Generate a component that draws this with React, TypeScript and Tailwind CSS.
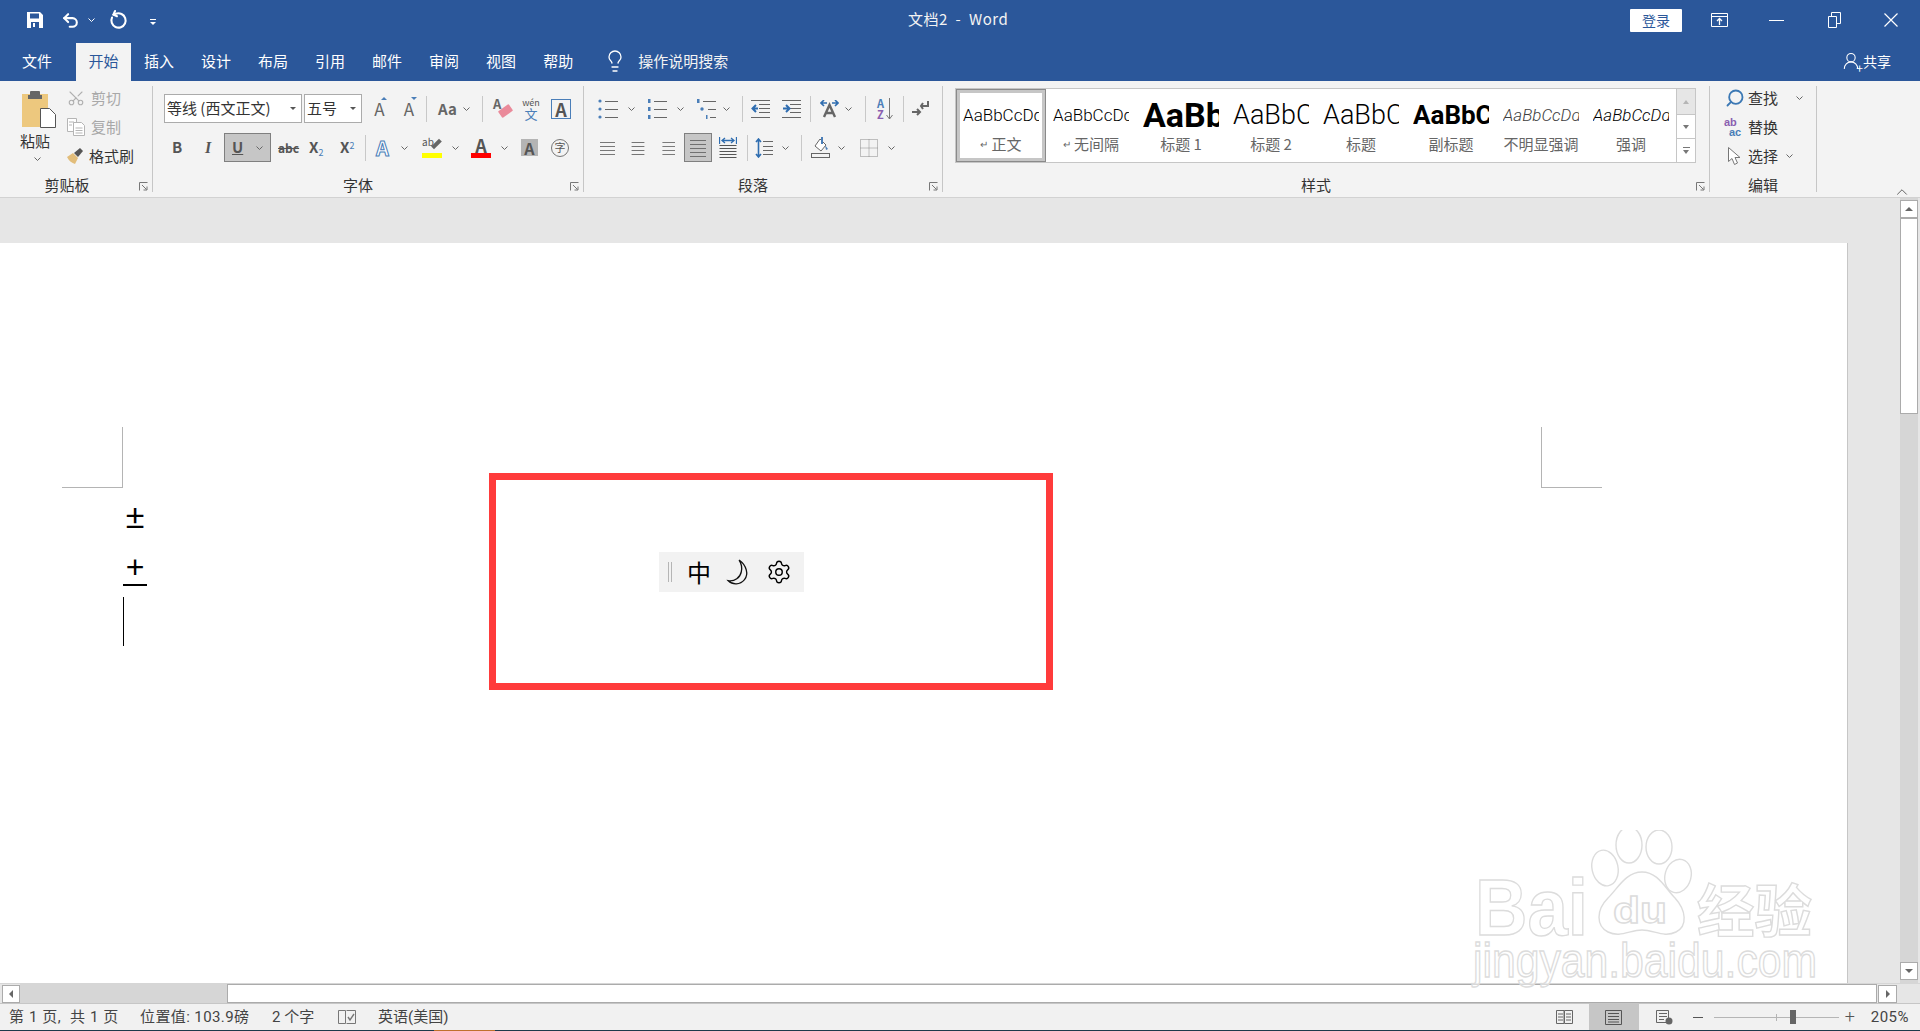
import { ChevronUp, Lightbulb, RotateCcw, Scissors, Search, Settings, Undo2, UserRound } from 'lucide-react';

const Chev = ({ className = '' }: { className?: string }) => (
	<svg className={`w-[7px] h-[4px] shrink-0 ${className}`} viewBox="0 0 7 4" fill="none" stroke="#666"><path d="M.5.5l3 3 3-3" /></svg>
);
const Sep = ({ className = '' }: { className?: string }) => <div className={`w-px h-[26px] bg-[#c8c8c8] shrink-0 ${className}`} />;

const Launcher = () => (
	<svg className="absolute right-[4px] bottom-[1px] w-[9px] h-[9px]" viewBox="0 0 9 9" fill="none" stroke="#777">
		<path d="M.5 8.5v-8h8" /><path d="M3 3l4.5 4.5M8 4.5V8H4.5" />
	</svg>
);

// list style icons for the paragraph group
const Lines = ({ rows, x1, x2, className = '' }: { rows: number[]; x1: number; x2: number; className?: string }) => (
	<svg className={`h-[18px] shrink-0 ${className}`} viewBox="0 0 20 18" stroke="#666" fill="none" preserveAspectRatio="none">
		{rows.map((y) => <path key={y} d={`M${x1} ${y}.5H${x2}`} />)}
	</svg>
);

const Bullets = ({ kind, className = '' }: { kind: 'dot' | 'num' | 'multi'; className?: string }) => (
	<svg className={`w-[20px] h-[20px] shrink-0 ${className}`} viewBox="0 0 20 20">
		{kind === 'dot' && [2, 10, 18].map((y) => <circle key={y} cx="2" cy={y} r="1.6" fill="#4a7eb8" />)}
		{kind === 'num' && [2, 10, 18].map((y) => <rect key={y} x="1" y={y - 2} width="2.5" height="4" fill="#4a7eb8" />)}
		{kind === 'multi' && <><rect x="1" y="0" width="2.5" height="4" fill="#4a7eb8" /><circle cx="6" cy="10" r="1.7" fill="#4a7eb8" /><rect x="10" y="16" width="1.5" height="4" fill="#4a7eb8" /></>}
		{kind === 'multi'
			? <path d="M7 2.5h13M12 10.5h8M14 18.5h6" stroke="#666" />
			: <path d="M7 2.5h13M7 10.5h13M7 18.5h13" stroke="#666" />}
	</svg>
);

const Indent = ({ flip, className = '' }: { flip?: boolean; className?: string }) => (
	<svg className={`w-[19px] h-[18px] shrink-0 ${className}`} viewBox="0 0 19 18" fill="none">
		<path d="M0 .5h19M8 4.5h11M8 8.5h11M8 12.5h11M0 17.5h19" stroke="#666" />
		{flip
			? <path d="M1 8.5h5M4 5l3.5 3.5L4 12" stroke="#2f6db0" strokeWidth="2" />
			: <path d="M7 8.5H2M5 5L1.5 8.5 5 12" stroke="#2f6db0" strokeWidth="2" />}
	</svg>
);

const styles = [
	{ sample: 'AaBbCcDdEe', label: '正文', mark: true, text: 'text-[17px] font-light text-black', active: true },
	{ sample: 'AaBbCcDdEe', label: '无间隔', mark: true, text: 'text-[17px] font-light text-black' },
	{ sample: 'AaBbCc', label: '标题 1', text: 'text-[34px] font-bold text-black' },
	{ sample: 'AaBbCc', label: '标题 2', text: 'text-[27px] font-light text-black' },
	{ sample: 'AaBbCc', label: '标题', text: 'text-[27px] font-light text-black' },
	{ sample: 'AaBbCc', label: '副标题', text: 'text-[26px] font-bold text-black' },
	{ sample: 'AaBbCcDdEe', label: '不明显强调', text: 'text-[17px] font-light italic text-[#404040]' },
	{ sample: 'AaBbCcDdEe', label: '强调', text: 'text-[17px] font-light italic text-black' },
];

function TitleBar() {
	return (
		<div className="h-[43px] flex items-center pb-[3px] text-white shrink-0">
			<div className="w-[908px] shrink-0 flex items-center">
				<svg className="ml-[27px] w-[16px] h-[16px]" viewBox="0 0 16 16"><path fillRule="evenodd" d="M0 0h13l3 3v13H0zM3 1.5v5h9v-5zM4 10v6h8v-6z" fill="#fff" /><rect x="6" y="11" width="2" height="4" fill="#fff" /></svg>
				<Undo2 className="ml-[18px] w-[19px] h-[19px]" strokeWidth={2.6} />
				<Chev className="ml-[8px] [&_path]:stroke-white" />
				<RotateCcw className="ml-[14px] w-[19px] h-[19px] rotate-[25deg]" strokeWidth={2.6} />
				<div className="ml-[22px] flex flex-col items-center gap-[2px] pt-[4px]">
					<div className="w-[6px] h-px bg-white" />
					<div className="w-0 h-0 border-x-[3px] border-x-transparent border-t-[3px] border-t-white" />
				</div>
			</div>
			<span className="w-[722px] shrink-0 pb-[2px] text-[15px] text-[#f3f3f3] tracking-[0.5px]">文档2 &nbsp;-&nbsp; Word</span>
			<button className="w-[52px] h-[23px] bg-white rounded-[1px] text-[#2b579a] text-[14px] leading-[23px]">登录</button>
			<svg className="ml-[29px] w-[17px] h-[14px]" viewBox="0 0 17 14" fill="none" stroke="#fff"><path d="M.5.5h16v13H.5zM.5 3.5h16" /><path d="M8.5 12V6M6 8l2.5-2.5L11 8" strokeWidth="1.3" /></svg>
			<div className="ml-[41px] w-[15px] h-px bg-white" />
			<svg className="ml-[44px] w-[13px] h-[16px]" viewBox="0 0 13 16" fill="none" stroke="#fff"><path d="M.5 4.5h8v11h-8zM3.5 4V.5h9v11H9" /></svg>
			<svg className="ml-[43px] w-[14px] h-[14px]" viewBox="0 0 14 14" fill="none" stroke="#fff" strokeWidth="1.2"><path d="M.5.5l13 13M13.5.5l-13 13" /></svg>
		</div>
	);
}

function TabBar() {
	const tabs = ['插入', '设计', '布局', '引用', '邮件', '审阅', '视图', '帮助'];
	return (
		<div className="h-[38px] pb-[2px] flex items-center text-white text-[15px] shrink-0">
			<span className="ml-[22px]">文件</span>
			<div className="ml-[24px] w-[55px] h-[38px] pb-[2px] self-start bg-[#f3f3f3] text-[#2b579a] flex items-center justify-center">开始</div>
			<div className="ml-[13px] flex gap-[27px]">
				{tabs.map((t) => <span key={t}>{t}</span>)}
			</div>
			<Lightbulb className="ml-[30px] w-[24px] h-[24px]" strokeWidth={1.3} />
			<span className="ml-[11px] text-[#f3f3f3]">操作说明搜索</span>
			<div className="ml-auto pr-[29px] flex items-center gap-[2px]">
				<div className="relative">
					<UserRound className="w-[20px] h-[20px]" strokeWidth={1.3} />
					<span className="absolute -right-[2px] -bottom-[2px] text-[12px] leading-[10px]">+</span>
				</div>
				<span className="text-[14px]">共享</span>
			</div>
		</div>
	);
}

function Clipboard() {
	return (
		<div className="relative w-[153px] h-[106px] shrink-0 border-r border-[#c6c6c6] flex flex-col">
			<div className="flex-1 flex">
				<div className="w-[67px] shrink-0 flex flex-col">
					<svg className="ml-[21px] mt-[3px] w-[35px] h-[39px]" viewBox="0 0 35 39">
						<rect x="1" y="5" width="26" height="33" fill="#edc87e" />
						<rect x="9" y="2" width="10" height="6" rx="1" fill="#666" />
						<rect x="7" y="6" width="14" height="4" fill="#666" />
						<path d="M19.5 19.5h9l6 6v13h-15z" fill="#fff" stroke="#555" />
					</svg>
					<span className="ml-[20px] mt-[3px] text-[15px] text-[#333] leading-[20px]">粘贴</span>
					<Chev className="ml-[34px] mt-[6px]" />
				</div>
				<div className="flex flex-col gap-[5px] text-[15px]">
					<div className="h-[24px] flex items-center text-[#a8a8a8] gap-[6px]"><Scissors className="w-[18px] h-[18px] -rotate-90 text-[#b0b0b0]" strokeWidth={1.5} /><span>剪切</span></div>
					<div className="h-[24px] flex items-center text-[#a8a8a8] gap-[6px]">
						<svg className="w-[18px] h-[18px]" viewBox="0 0 18 18" fill="#fff" stroke="#b5b5b5"><path d="M.5.5h9v13h-9z" /><path d="M6.5 4.5h8l3 3v10h-11z" /><path d="M2 4h5M2 7h3M8.5 10h7M8.5 12.5h7M8.5 15h7" /></svg>
						<span>复制</span>
					</div>
					<div className="h-[24px] flex items-center text-[#333] gap-[5px] -ml-[1px]">
						<svg className="w-[18px] h-[16px]" viewBox="0 0 18 16"><path d="M1 9l6-4 5 5-3 6c-3-1-6-3-8-7z" fill="#e2bd7a" /><path d="M8 5l6-5 3 3-5 6z" fill="#555" /></svg>
						<span>格式刷</span>
					</div>
				</div>
			</div>
			<div className="h-[16px] -mb-[1px] pr-[18px] flex justify-center items-center text-[15px] text-[#333]">剪贴板</div>
			<Launcher />
		</div>
	);
}

function FontGroup() {
	return (
		<div className="relative w-[431px] h-[106px] shrink-0 border-r border-[#c6c6c6] flex flex-col">
			<div className="flex-1 pt-[8px]">
				<div className="h-[29px] flex items-center">
					<div className="ml-[11px] w-[138px] h-[29px] shrink-0 bg-white border border-[#ababab] flex items-center pl-[2px] text-[15px] text-[#333]">
						<span className="flex-1 whitespace-nowrap">等线 (西文正文)</span>
						<div className="mr-[5px] w-0 h-0 border-x-[3px] border-x-transparent border-t-[3px] border-t-[#555]" />
					</div>
					<div className="ml-[2px] w-[58px] h-[29px] shrink-0 bg-white border border-[#ababab] flex items-center pl-[2px] text-[15px] text-[#333]">
						<span className="flex-1">五号</span>
						<div className="mr-[5px] w-0 h-0 border-x-[3px] border-x-transparent border-t-[3px] border-t-[#555]" />
					</div>
					<div className="ml-[10px] w-[15px] relative text-[17px] text-[#666] leading-none text-center">A<div className="absolute -top-[3px] right-0 w-0 h-0 border-x-[3px] border-x-transparent border-b-[3px] border-b-[#4a7eb8]" /></div>
					<div className="ml-[15px] w-[14px] relative text-[17px] text-[#666] leading-none text-center">A<div className="absolute -top-[3px] -right-[1px] w-0 h-0 border-x-[3px] border-x-transparent border-t-[3px] border-t-[#4a7eb8]" /></div>
					<Sep className="ml-[10px]" />
					<span className="ml-[11px] w-[17px] text-[15px] text-[#666] font-bold leading-none">Aa</span>
					<Chev className="ml-[8px]" />
					<Sep className="ml-[12px]" />
					<div className="ml-[10px] w-[18px] h-[22px] relative shrink-0">
						<span className="absolute left-0 -top-[1px] text-[13px] text-[#666] font-bold leading-none">A</span>
						<div className="absolute left-[6px] top-[9px] w-[13px] h-[8px] rotate-[-35deg] bg-[#ea8a9a] rounded-[1px]" />
					</div>
					<div className="ml-[12px] w-[16px] flex flex-col items-center text-[#4a7eb8] leading-none">
						<span className="text-[9px] text-[#555]">wén</span>
						<span className="text-[13px]">文</span>
					</div>
					<div className="ml-[12px] w-[20px] h-[20px] border border-[#4a7eb8] flex items-center justify-center text-[18px] font-bold text-[#555] leading-none">A</div>
				</div>
				<div className="mt-[10px] h-[29px] flex items-center text-[#555]">
					<span className="ml-[18px] w-[12px] text-center text-[15px] font-bold">B</span>
					<span className="ml-[20px] w-[10px] text-center text-[16px] italic font-bold font-['Liberation_Serif',serif]">I</span>
					<div className="ml-[11px] w-[47px] h-[29px] bg-[#c6c6c6] border border-[#7f7f7f] flex items-center pl-[7px] gap-[13px]">
						<span className="text-[15px] font-bold underline">U</span>
						<Chev />
					</div>
					<span className="ml-[7px] w-[19px] text-[12px] font-bold line-through">abc</span>
					<span className="ml-[12px] w-[16px] text-[15px] font-bold">X<sub className="text-[9px] text-[#4a7eb8] font-normal">2</sub></span>
					<span className="ml-[15px] w-[14px] text-[15px] font-bold">X<sup className="text-[9px] text-[#4a7eb8] font-normal">2</sup></span>
					<Sep className="ml-[11px]" />
					<span className="ml-[10px] w-[16px] text-[20px] leading-none font-bold text-white [-webkit-text-stroke:1px_#4a7eb8]">A</span>
					<Chev className="ml-[9px]" />
					<div className="ml-[14px] w-[20px] h-[21px] shrink-0 flex flex-col justify-end relative">
						<span className="absolute left-0 top-0 text-[10px] leading-none">ab</span>
						<div className="absolute left-[9px] top-[5px] w-[11px] h-[4px] -rotate-[45deg] bg-[#666]" />
						<div className="h-[5px] bg-[#ffff00]" />
					</div>
					<Chev className="ml-[10px]" />
					<div className="ml-[12px] w-[20px] shrink-0 flex flex-col items-center">
						<span className="text-[18px] leading-[16px] font-bold">A</span>
						<div className="w-[20px] h-[5px] bg-[#ff0000]" />
					</div>
					<Chev className="ml-[10px]" />
					<div className="ml-[13px] w-[17px] h-[17px] bg-[#b4b4b4] flex items-center justify-center text-[16px] font-bold leading-none">A</div>
					<div className="ml-[13px] w-[18px] h-[18px] border border-[#777] rounded-full flex items-center justify-center text-[11px] leading-none">字</div>
				</div>
			</div>
			<div className="h-[16px] -mb-[1px] pr-[20px] flex justify-center items-center text-[15px] text-[#333]">字体</div>
			<Launcher />
		</div>
	);
}

function ParagraphGroup() {
	return (
		<div className="relative w-[359px] h-[106px] shrink-0 border-r border-[#c6c6c6] flex flex-col">
			<div className="flex-1 pt-[8px]">
				<div className="h-[29px] flex items-center">
					<Bullets kind="dot" className="ml-[14px]" />
					<Chev className="ml-[10px]" />
					<Bullets kind="num" className="ml-[12px]" />
					<Chev className="ml-[10px]" />
					<Bullets kind="multi" className="ml-[12px]" />
					<Chev className="ml-[7px]" />
					<Sep className="ml-[12px]" />
					<Indent className="ml-[8px]" />
					<Indent flip className="ml-[12px]" />
					<Sep className="ml-[9px]" />
					<svg className="ml-[9px] w-[19px] h-[18px] shrink-0" viewBox="0 0 19 18" fill="none">
						<path d="M1 3h6M4 0L1 3l3 3M18 3h-6M15 0l3 3-3 3" stroke="#2f6db0" strokeWidth="1.6" />
						<path d="M4 17l5.5-12L15 17M6.5 13h6" stroke="#666" strokeWidth="2.4" />
					</svg>
					<Chev className="ml-[6px]" />
					<Sep className="ml-[13px]" />
					<div className="ml-[11px] w-[16px] h-[22px] relative shrink-0 leading-none text-[11px] font-bold">
						<span className="absolute left-0 top-0 text-[#4a7eb8]">A</span>
						<span className="absolute left-0 bottom-0 text-[#8a5fb0]">Z</span>
						<svg className="absolute right-0 top-0 w-[7px] h-[22px]" viewBox="0 0 7 22" fill="none" stroke="#777"><path d="M3.5 0v21M.5 17l3 4 3-4" /></svg>
					</div>
					<Sep className="ml-[10px]" />
					<svg className="ml-[8px] w-[17px] h-[17px] shrink-0" viewBox="0 0 17 17" fill="none" stroke="#666" strokeWidth="2"><path d="M16 1v5H9M11 3L9 6l2 3" /><path d="M0 12h7M5 9l3 3-3 3" /></svg>
				</div>
				<div className="mt-[10px] h-[29px] flex items-center">
					<Lines rows={[3, 7, 11, 15]} x1={0} x2={20} className="ml-[16px] w-[15px] h-[14px]" />
					<Lines rows={[3, 7, 11, 15]} x1={2} x2={18} className="ml-[15px] w-[16px] h-[14px]" />
					<Lines rows={[3, 7, 11, 15]} x1={2} x2={20} className="ml-[15px] w-[14px] h-[14px]" />
					<div className="ml-[9px] w-[28px] h-[29px] shrink-0 bg-[#c6c6c6] border border-[#7f7f7f] flex items-center justify-center">
						<Lines rows={[1, 5, 9, 13, 17]} x1={0} x2={20} className="w-[16px] h-[16px]" />
					</div>
					<svg className="ml-[7px] w-[18px] h-[21px] shrink-0" viewBox="0 0 18 21" fill="none" stroke="#555"><path d="M.5 8.5h17M.5 11.5h17M.5 14.5h17M.5 17.5h17M.5 20.5h17" /><path d="M3 3.5h12M6 1L3 3.5 6 6M12 1l3 2.5L12 6M.5 0v7M17.5 0v7" stroke="#2f6db0" strokeWidth="1.3" /></svg>
					<Sep className="ml-[10px]" />
					<svg className="ml-[7px] w-[18px] h-[20px] shrink-0" viewBox="0 0 18 20" fill="none"><path d="M3.5 1v18M1 4l2.5-3L6 4M1 16l2.5 3L6 16" stroke="#2f6db0" strokeWidth="1.6" /><path d="M8 3.5h10M8 8.5h10M8 12.5h10M8 16.5h10" stroke="#666" /></svg>
					<Chev className="ml-[9px]" />
					<Sep className="ml-[12px]" />
					<svg className="ml-[9px] w-[19px] h-[21px] shrink-0" viewBox="0 0 19 21" fill="none"><path d="M9 2l6 6-5 6-6-5z" stroke="#666" fill="#fff" /><path d="M10 0h2v7h-2zM14 8l3 4-2 1z" fill="#4a7eb8" /><rect x=".5" y="16.5" width="18" height="4" stroke="#666" /></svg>
					<Chev className="ml-[8px]" />
					<svg className="ml-[15px] w-[18px] h-[18px] shrink-0" viewBox="0 0 18 18" fill="none" stroke="#888" strokeDasharray="1 1"><path d="M.5.5h17v17H.5zM9 .5v17M.5 9h17" /></svg>
					<Chev className="ml-[10px]" />
				</div>
			</div>
			<div className="h-[16px] -mb-[1px] pr-[20px] flex justify-center items-center text-[15px] text-[#333]">段落</div>
			<Launcher />
		</div>
	);
}

function StylesGroup() {
	return (
		<div className="relative w-[767px] h-[106px] shrink-0 border-r border-[#c6c6c6] flex flex-col">
			<div className="flex-1 pt-[2px]">
				<div className="ml-[12px] w-[741px] h-[75px] bg-white border border-[#c6c6c6] flex">
					{styles.map((s) => (
						<div key={s.label} className={`w-[90px] shrink-0 flex flex-col items-center ${s.active ? 'border-[4px] border-[#c6c6c6] outline outline-1 -outline-offset-1 outline-[#8a8a8a]' : 'pt-[4px]'}`}>
							<div className={`w-[76px] h-[42px] pt-[3px] overflow-hidden whitespace-nowrap flex items-center font-['Roboto','Liberation_Sans',sans-serif] ${s.text}`}>{s.sample}</div>
							<span className="text-[15px] leading-[18px] text-[#666] whitespace-nowrap flex items-center gap-[3px]">
								{s.mark && <span className="text-[10px]">↵</span>}
								{s.label}
							</span>
						</div>
					))}
					<div className="w-[19px] shrink-0 flex flex-col border-l border-[#c6c6c6]">
						<div className="h-[26px] bg-[#e6e6e6] flex items-center justify-center border-b border-[#c6c6c6]"><div className="w-0 h-0 border-x-[3px] border-x-transparent border-b-[4px] border-b-[#b5b5b5]" /></div>
						<div className="h-[24px] flex items-center justify-center border-b border-[#c6c6c6]"><div className="w-0 h-0 border-x-[3px] border-x-transparent border-t-[4px] border-t-[#777]" /></div>
						<div className="flex-1 flex flex-col items-center justify-center gap-[2px]"><div className="w-[7px] h-px bg-[#777]" /><div className="w-0 h-0 border-x-[3px] border-x-transparent border-t-[4px] border-t-[#777]" /></div>
					</div>
				</div>
			</div>
			<div className="h-[16px] -mb-[1px] pr-[20px] flex justify-center items-center text-[15px] text-[#333]">样式</div>
			<Launcher />
		</div>
	);
}

function EditGroup() {
	return (
		<div className="w-[107px] h-[106px] shrink-0 border-r border-[#c6c6c6] flex flex-col">
			<div className="flex-1 flex flex-col gap-[5px] text-[15px] text-[#333]">
				<div className="h-[24px] flex items-center pl-[15px] gap-[3px]">
					<Search className="w-[20px] h-[20px] -scale-x-100 text-[#3b78b4]" strokeWidth={2.2} />
					<span>查找</span>
					<Chev className="ml-[15px]" />
				</div>
				<div className="h-[24px] flex items-center pl-[13px] gap-[4px]">
					<div className="w-[21px] flex flex-col leading-[10px] text-[11px] font-bold font-['Liberation_Sans',sans-serif]">
						<span className="text-[#8a5fb0] pl-[1px]">ab</span>
						<span className="text-[#4a7eb8] pl-[6px]">ac</span>
					</div>
					<span>替换</span>
				</div>
				<div className="h-[24px] flex items-center pl-[18px] gap-[7px]">
					<svg className="w-[13px] h-[18px]" viewBox="0 0 13 18" fill="#fff" stroke="#777"><path d="M.5.5v14l3.5-3 2.5 6 3-1.5-2.5-5.5h5z" /></svg>
					<span>选择</span>
					<Chev className="ml-[1px]" />
				</div>
			</div>
			<div className="h-[16px] -mb-[1px] flex justify-center items-center text-[15px] text-[#333]">编辑</div>
		</div>
	);
}

function Ribbon() {
	return (
		<div className="h-[117px] shrink-0 bg-[#f3f3f3] border-b border-[#d2d2d2] pt-[5px] flex items-start">
			<Clipboard />
			<FontGroup />
			<ParagraphGroup />
			<StylesGroup />
			<EditGroup />
			<ChevronUp className="ml-[76px] mt-[97px] w-[18px] h-[18px] text-[#555]" strokeWidth={1.2} />
		</div>
	);
}

function Page() {
	return (
		<div className="relative flex-1 bg-white border-r border-[#c6c6c6]">
			{/* crop marks, positions relative to the page which starts at y=243 */}
			<div className="absolute left-[62px] top-[184px] w-[61px] h-[61px] border-r border-b border-[#b4b4b4]" />
			<div className="absolute left-[1541px] top-[184px] w-[61px] h-[61px] border-l border-b border-[#b4b4b4]" />
			<div className="absolute left-[119px] top-[255px] w-[32px] text-center text-[34px] leading-[36px] text-black font-['Liberation_Sans',sans-serif]">±</div>
			<div className="absolute left-[123px] top-[307px] w-[24px] flex flex-col items-center font-['Liberation_Sans',sans-serif]">
				<span className="text-[32px] leading-[34px] text-black">+</span>
				<div className="w-[24px] h-[2px] bg-black" />
			</div>
			<div className="absolute left-[123px] top-[354px] w-px h-[49px] bg-black" />

			{/* annotation box with the IME toolbar */}
			<div className="absolute left-[489px] top-[230px] w-[564px] h-[217px] border-[7px] border-[#ff3b3b]" />
			<div className="absolute left-[659px] top-[309px] w-[145px] h-[40px] bg-[#f2f2f2] flex items-center text-black">
				<div className="ml-[9px] w-[4px] h-[20px] border-x border-[#b5b5b5]" />
				<span className="ml-[15px] text-[24px] leading-none">中</span>
				<svg className="ml-[14px] w-[26px] h-[26px]" viewBox="0 0 24 24" fill="none" stroke="#111" strokeWidth="1.2"><path d="M13 1c7 5 9 13 5 18-4 5-11 5-15 1 6 1 11-3 12-8 1-4 0-8-2-11z" /></svg>
				<Settings className="ml-[15px] w-[26px] h-[26px]" strokeWidth={1.3} />
			</div>
		</div>
	);
}

function DocArea() {
	return (
		<div className="h-[785px] shrink-0 flex bg-[#e6e6e6]">
			<div className="w-[1848px] pt-[45px] flex flex-col shrink-0">
				<Page />
			</div>
			<div className="ml-[52px] w-[18px] flex flex-col pt-[2px] bg-[#d6d6d6]">
				<div className="h-[18px] bg-white border border-[#ababab] flex items-center justify-center"><div className="w-0 h-0 border-x-[4px] border-x-transparent border-b-[4px] border-b-[#666]" /></div>
				<div className="h-[196px] bg-white border border-[#ababab]" />
				<div className="flex-1" />
				<div className="h-[18px] mb-[3px] bg-white border border-[#ababab] flex items-center justify-center"><div className="w-0 h-0 border-x-[4px] border-x-transparent border-t-[4px] border-t-[#666]" /></div>
			</div>
		</div>
	);
}

function HScroll() {
	return (
		<div className="h-[20px] shrink-0 bg-[#e6e6e6] flex items-center pl-[2px] border-t border-[#d6d6d6]">
			<div className="w-[18px] h-[18px] bg-white border border-[#ababab] flex items-center justify-center"><div className="w-0 h-0 border-y-[4px] border-y-transparent border-r-[4px] border-r-[#666]" /></div>
			<div className="w-[207px] h-[19px] bg-[#d6d6d6]" />
			<div className="w-[1650px] h-[19px] bg-white border border-[#ababab]" />
			<div className="ml-[1px] w-[19px] h-[18px] bg-white border border-[#ababab] flex items-center justify-center"><div className="w-0 h-0 border-y-[4px] border-y-transparent border-l-[4px] border-l-[#666]" /></div>
		</div>
	);
}

function StatusBar() {
	return (
		<div className="h-[27px] shrink-0 pr-[11px] bg-[#f1f1f1] border-t border-[#c6c6c6] flex items-center text-[15px] text-[#444] font-['Roboto','Noto_Sans_CJK_SC',sans-serif]">
			<span className="ml-[9px] w-[131px] shrink-0 whitespace-pre tracking-[0.6px]">第 1 页,  共 1 页</span>
			<span className="w-[132px] shrink-0 tracking-[0.4px]">位置值: 103.9磅</span>
			<span className="w-[66px] shrink-0">2 个字</span>
			<svg className="w-[18px] h-[15px] shrink-0" viewBox="0 0 18 15" fill="none" stroke="#777"><path d="M.5.5h7v13h-7zM8.5.5h9v13h-9" /><path d="M10 7l2 3 4-6" strokeWidth="1.4" /></svg>
			<span className="ml-[22px]">英语(美国)</span>
			<svg className="ml-auto w-[17px] h-[15px] shrink-0" viewBox="0 0 17 15" fill="none" stroke="#666"><path d="M.5.5h7.5v13H.5zM8.5.5H16.5v13H8.5zM2 4h5M2 7h5M2 10h5M10 4h5M10 7h5M10 10h5" /></svg>
			<div className="ml-[16px] w-[50px] h-[26px] bg-[#c6c6c6] flex items-center justify-center shrink-0">
				<svg className="w-[17px] h-[15px]" viewBox="0 0 17 15" fill="none" stroke="#555"><path d="M.5.5h16v14H.5zM3 3.5h11M3 6.5h11M3 9.5h11M3 12h11" /></svg>
			</div>
			<svg className="ml-[17px] w-[17px] h-[15px] shrink-0" viewBox="0 0 17 15" fill="none" stroke="#666"><path d="M.5.5h12v12H.5zM3 3.5h8M3 6.5h8M3 9.5h5" /><circle cx="13" cy="11" r="3.5" fill="#666" stroke="none" /></svg>
			<div className="ml-[20px] w-[10px] h-px bg-[#555] shrink-0" />
			<div className="ml-[11px] w-[125px] h-px bg-[#b5b5b5] relative shrink-0">
				<div className="absolute left-[62px] -top-[3px] w-px h-[7px] bg-[#b5b5b5]" />
				<div className="absolute left-[76px] -top-[7px] w-[6px] h-[14px] bg-[#666]" />
			</div>
			<span className="ml-[5px] w-[12px] text-center text-[18px] leading-none text-[#555] font-light">+</span>
			<span className="ml-[15px] tracking-[0.5px] whitespace-nowrap">205%</span>
		</div>
	);
}

function Watermark() {
	const line = { fill: '#fff', fillOpacity: 0.55, stroke: '#dcdcdc', strokeWidth: 1.4 };
	return (
		<svg className="absolute left-[1460px] top-[830px] w-[370px] h-[170px] pointer-events-none" viewBox="0 0 370 170">
			<text x="15" y="105" fontSize="80" fontWeight="700" fontFamily="Liberation Sans" textLength="113" lengthAdjust="spacingAndGlyphs" {...line}>Bai</text>
			<ellipse cx="145" cy="38" rx="13" ry="18" transform="rotate(-12 145 38)" {...line} />
			<ellipse cx="169" cy="15" rx="13" ry="18" {...line} />
			<ellipse cx="199" cy="17" rx="13" ry="17" {...line} />
			<ellipse cx="218" cy="46" rx="13" ry="17" transform="rotate(15 218 46)" {...line} />
			<path d="M182 42c16 0 23 16 33 26 11 12 13 28 1 34-12 6-22-2-34-2s-22 8-34 2c-12-6-12-22 0-34 10-10 18-26 34-26z" {...line} />
			<text x="153" y="93" fontSize="36" fontWeight="700" fontFamily="Liberation Sans" textLength="54" lengthAdjust="spacingAndGlyphs" {...line}>du</text>
			<text x="237" y="102" fontSize="57" fontWeight="700" fontFamily="Noto Sans CJK SC" textLength="115" lengthAdjust="spacingAndGlyphs" {...line}>经验</text>
			<text x="13" y="147" fontSize="48" fontFamily="Liberation Sans" textLength="344" lengthAdjust="spacingAndGlyphs" {...line}>jingyan.baidu.com</text>
		</svg>
	);
}

export default function App() {
	return (
		<div className="relative w-[1920px] h-[1031px] overflow-hidden flex flex-col bg-[#e6e6e6] font-['Noto_Sans_CJK_SC','Liberation_Sans',sans-serif]">
			<div className="bg-[#2b579a] shrink-0">
				<TitleBar />
				<TabBar />
			</div>
			<Ribbon />
			<DocArea />
			<HScroll />
			<StatusBar />
			<div className="h-px flex shrink-0">
				<div className="w-[434px] bg-[#1d3a4a]" />
				<div className="w-[61px] bg-[#c0702c]" />
				<div className="flex-1 bg-[#1d3a4a]" />
			</div>
			<Watermark />
		</div>
	);
}
